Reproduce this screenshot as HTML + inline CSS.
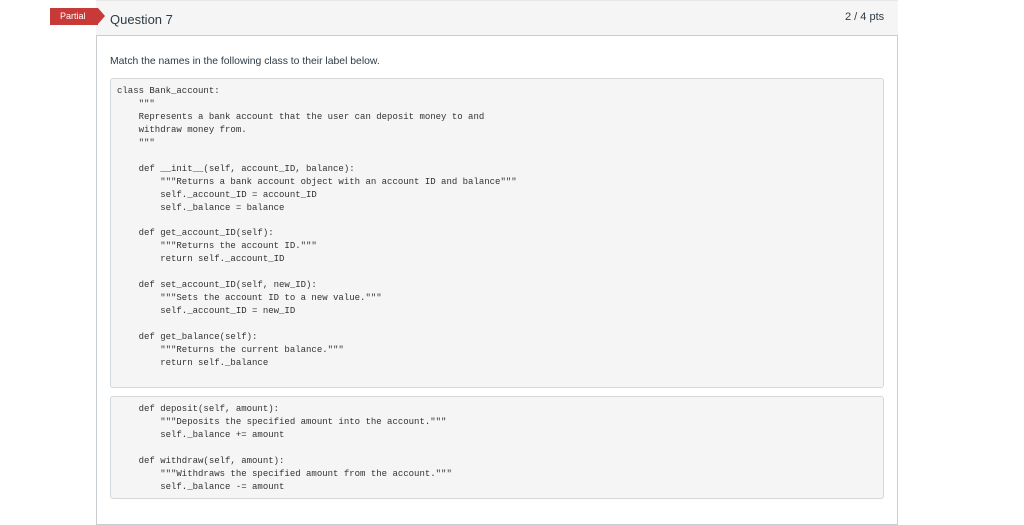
<!DOCTYPE html>
<html><head><meta charset="utf-8"><style>
body{margin:0;width:1024px;height:512px;background:#fff;position:relative;overflow:hidden;font-family:"Liberation Sans",sans-serif;}
.hdr{position:absolute;left:96px;top:0;width:802px;height:35px;background:#f5f5f5;border-top:1px solid #e8e8e8;box-sizing:border-box;}
.q{position:absolute;left:110px;top:12px;font-size:13px;color:#2d3b45;}
.pts{position:absolute;left:845px;top:11px;font-size:11px;color:#2d3b45;}
.badge{position:absolute;left:50px;top:8px;width:48px;height:17px;background:#c83a37;color:#fff;font-size:9px;line-height:17px;padding-left:10px;box-sizing:border-box;}
.badge:after{content:"";position:absolute;right:-7px;top:0;border-left:7px solid #c83a37;border-top:8.5px solid transparent;border-bottom:8.5px solid transparent;}
.box{position:absolute;left:96px;top:35px;width:802px;height:490px;border:1px solid #c7cdd1;box-sizing:border-box;}
.txt{position:absolute;left:110px;top:56px;font-size:10.4px;color:#2d3b45;}
pre{position:absolute;left:110px;width:774px;margin:0;background:#f5f5f5;border:1px solid #d5d8da;border-radius:3px;box-sizing:border-box;padding:6px 6px;font-family:"Liberation Mono",monospace;font-size:9px;line-height:12.95px;color:#333;}
</style></head><body>
<div class="hdr"></div>
<div class="badge">Partial</div>
<div class="q">Question 7</div>
<div class="pts">2 / 4 pts</div>
<div class="box"></div>
<div class="txt">Match the names in the following class to their label below.</div>
<pre style="top:78px;height:310px">class Bank_account:
    """
    Represents a bank account that the user can deposit money to and
    withdraw money from.
    """

    def __init__(self, account_ID, balance):
        """Returns a bank account object with an account ID and balance"""
        self._account_ID = account_ID
        self._balance = balance

    def get_account_ID(self):
        """Returns the account ID."""
        return self._account_ID

    def set_account_ID(self, new_ID):
        """Sets the account ID to a new value."""
        self._account_ID = new_ID

    def get_balance(self):
        """Returns the current balance."""
        return self._balance</pre>
<pre style="top:396px;height:103px">    def deposit(self, amount):
        """Deposits the specified amount into the account."""
        self._balance += amount

    def withdraw(self, amount):
        """Withdraws the specified amount from the account."""
        self._balance -= amount</pre>
</body></html>
